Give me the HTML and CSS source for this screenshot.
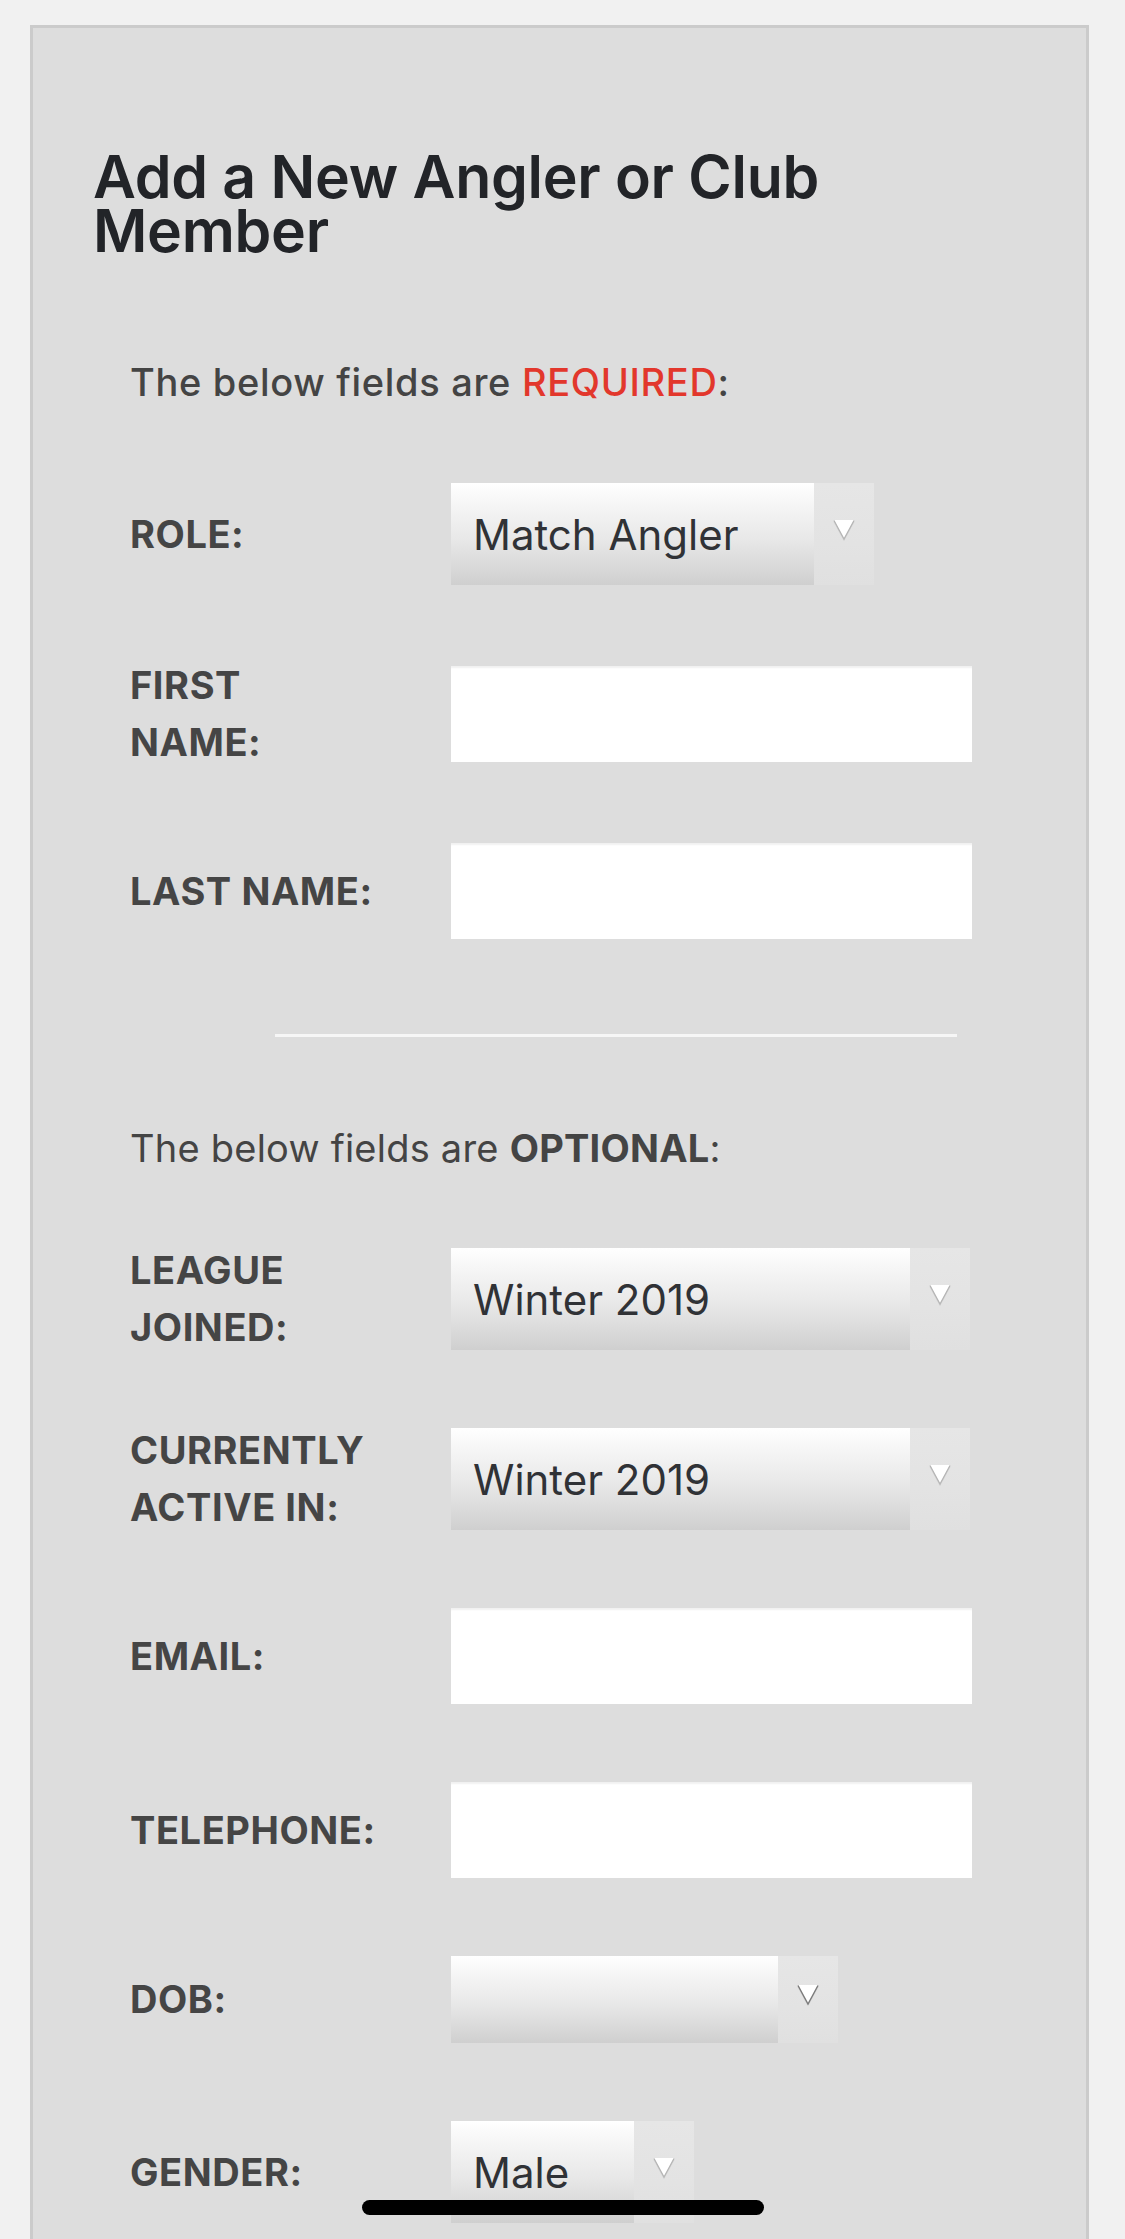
FILE: index.html
```html
<!DOCTYPE html>
<html lang="en">
<head>
<meta charset="utf-8">
<title>Add a New Angler or Club Member</title>
<link rel="stylesheet" href="styles.css">
</head>
<body>
<div class="card">
  <h1 class="title">Add a New Angler or Club Member</h1>
  <form class="form">
    <p class="note note-req">The below fields are <span class="req">REQUIRED</span>:</p>
    <div class="rows rows-req">
      <div class="row">
        <div class="label"><span>ROLE:</span></div>
        <div class="select sel-role">
          <div class="sel-main">Match Angler</div>
          <div class="sel-arrow"><svg width="22" height="21" viewBox="0 0 22 21"><polygon points="1,1 21,1 11,20" fill="#ffffff"/><polyline points="1,1.5 11,20 21,1.5" fill="none" stroke="#b4b4b4" stroke-width="1.2"/></svg></div>
        </div>
      </div>
      <div class="row">
        <div class="label"><span>FIRST<br>NAME:</span></div>
        <div class="input"></div>
      </div>
      <div class="row">
        <div class="label"><span>LAST NAME:</span></div>
        <div class="input"></div>
      </div>
    </div>
    <div class="divider"></div>
    <p class="note note-opt">The below fields are <b>OPTIONAL</b>:</p>
    <div class="rows rows-opt">
      <div class="row">
        <div class="label"><span>LEAGUE<br>JOINED:</span></div>
        <div class="select sel-wide">
          <div class="sel-main">Winter 2019</div>
          <div class="sel-arrow"><svg width="22" height="21" viewBox="0 0 22 21"><polygon points="1,1 21,1 11,20" fill="#ffffff"/><polyline points="1,1.5 11,20 21,1.5" fill="none" stroke="#b4b4b4" stroke-width="1.2"/></svg></div>
        </div>
      </div>
      <div class="row">
        <div class="label"><span>CURRENTLY<br>ACTIVE IN:</span></div>
        <div class="select sel-wide">
          <div class="sel-main">Winter 2019</div>
          <div class="sel-arrow"><svg width="22" height="21" viewBox="0 0 22 21"><polygon points="1,1 21,1 11,20" fill="#ffffff"/><polyline points="1,1.5 11,20 21,1.5" fill="none" stroke="#b4b4b4" stroke-width="1.2"/></svg></div>
        </div>
      </div>
      <div class="row">
        <div class="label"><span>EMAIL:</span></div>
        <div class="input"></div>
      </div>
      <div class="row">
        <div class="label"><span>TELEPHONE:</span></div>
        <div class="input"></div>
      </div>
      <div class="row">
        <div class="label"><span>DOB:</span></div>
        <div class="select sel-dob">
          <div class="sel-main"></div>
          <div class="sel-arrow"><svg width="22" height="21" viewBox="0 0 22 21"><polygon points="1,1 21,1 11,20" fill="#ffffff"/><polyline points="1,1.5 11,20 21,1.5" fill="none" stroke="#7a7a7a" stroke-width="1.4"/></svg></div>
        </div>
      </div>
      <div class="row">
        <div class="label"><span>GENDER:</span></div>
        <div class="select sel-gender">
          <div class="sel-main">Male</div>
          <div class="sel-arrow"><svg width="22" height="21" viewBox="0 0 22 21"><polygon points="1,1 21,1 11,20" fill="#ffffff"/><polyline points="1,1.5 11,20 21,1.5" fill="none" stroke="#b4b4b4" stroke-width="1.2"/></svg></div>
        </div>
      </div>
    </div>
  </form>
</div>
<div class="home-indicator"></div>
</body>
</html>
```

FILE: styles.css
```css
html, body {
  margin: 0;
  padding: 0;
}

body {
  background: #f1f1f1;
  font-family: Inter, "Noto Sans", "Liberation Sans", sans-serif;
  color: #444444;
  overflow: hidden;
  height: 2239px;
}

.card {
  margin: 25px 36px 0 30px;
  border: 3px solid #cbcbcb;
  background: #dddddd;
  padding: 0 60px 400px 60px;
}

.title {
  margin: 122px 0 0 0;
  max-width: 840px;
  font-size: 59px;
  line-height: 54px;
  font-weight: 600;
  letter-spacing: -0.005em;
  color: #222428;
}

.form {
  padding-left: 37px;
}

.note {
  margin: 0;
  font-size: 38px;
  line-height: 57px;
  color: #444444;
}

.note-req {
  margin-top: 96px;
  font-weight: 500;
  letter-spacing: 0.018em;
}

.req {
  color: #e2372c;
}

.note-opt {
  margin-top: 83px;
  font-weight: 400;
  letter-spacing: 0.006em;
}

.note-opt b {
  font-weight: 700;
}

.rows {
  display: flex;
  flex-direction: column;
}

.rows-req {
  margin-top: 72px;
  gap: 81px;
}

.rows-opt {
  margin-top: 71px;
  gap: 78px;
}

.row {
  display: flex;
  align-items: center;
}

.label {
  width: 321px;
  flex: none;
  height: 0;
  display: flex;
  align-items: center;
  font-size: 38px;
  line-height: 57px;
  font-weight: 700;
  color: #454545;
  letter-spacing: 0.015em;
}

.input {
  width: 521px;
  height: 96px;
  background: #ffffff;
  box-shadow: inset 0 3px 2px -1px rgba(0, 0, 0, 0.06);
}

.divider {
  margin: 95px 0 0 145px;
  width: 682px;
  height: 3px;
  background: #f6f6f6;
}

.select {
  display: flex;
  height: 102px;
}

.sel-main {
  box-sizing: border-box;
  padding-left: 22px;
  display: flex;
  align-items: center;
  font-size: 42px;
  color: #303236;
  background: linear-gradient(to bottom, #ffffff 0%, #f6f6f6 20%, #e8e8e8 55%, #d6d6d6 88%, #cfcfcf 100%);
}

.sel-arrow {
  width: 60px;
  display: flex;
  align-items: center;
  justify-content: center;
  background: linear-gradient(to bottom, #e6e6e6 0%, #e3e3e3 60%, #e0e0e0 100%);
}

.sel-arrow svg {
  margin-bottom: 10px;
  filter: drop-shadow(0 1px 0 rgba(0, 0, 0, 0.08));
}

.sel-role .sel-main { width: 363px; }
.sel-wide .sel-main { width: 459px; }
.sel-dob { height: 87px; }
.sel-dob .sel-main { width: 327px; }
.sel-gender .sel-main { width: 183px; }

.home-indicator {
  position: fixed;
  left: 50%;
  bottom: 24px;
  transform: translateX(-50%);
  width: 402px;
  height: 15px;
  border-radius: 8px;
  background: #000000;
}
```
